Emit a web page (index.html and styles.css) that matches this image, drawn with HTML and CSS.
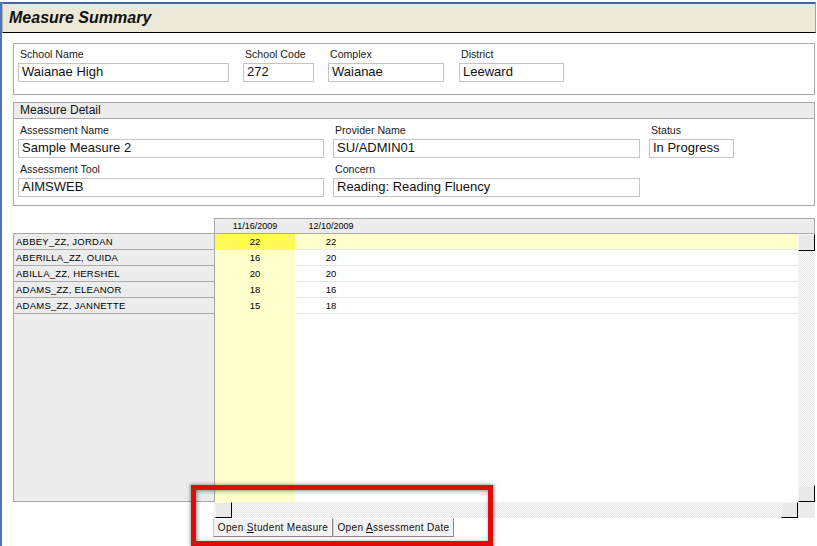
FILE: index.html
```html
<!DOCTYPE html>
<html>
<head>
<meta charset="utf-8">
<title>Measure Summary</title>
<link rel="stylesheet" href="styles.css">
</head>
<body>
<div class="window">
  <div class="titlebar">Measure Summary</div>
  <div class="content">
    <section class="panel school">
      <div class="field f-name"><label>School Name</label><div class="input">Waianae High</div></div>
      <div class="field f-code"><label>School Code</label><div class="input">272</div></div>
      <div class="field f-complex"><label>Complex</label><div class="input">Waianae</div></div>
      <div class="field f-district"><label>District</label><div class="input">Leeward</div></div>
    </section>

    <section class="panel detail">
      <div class="panel-head">Measure Detail</div>
      <div class="detail-grid">
        <div class="field"><label>Assessment Name</label><div class="input">Sample Measure 2</div></div>
        <div class="field"><label>Provider Name</label><div class="input">SU/ADMIN01</div></div>
        <div class="field"><label>Status</label><div class="input">In Progress</div></div>
        <div class="field"><label>Assessment Tool</label><div class="input">AIMSWEB</div></div>
        <div class="field"><label>Concern</label><div class="input">Reading: Reading Fluency</div></div>
      </div>
    </section>

    <div class="grid">
      <div class="corner"></div>
      <div class="col-head"><span class="ch c1">11/16/2009</span><span class="ch c2">12/10/2009</span></div>
      <div class="names">
        <div class="name-row">ABBEY_ZZ, JORDAN</div>
        <div class="name-row">ABERILLA_ZZ, OUIDA</div>
        <div class="name-row">ABILLA_ZZ, HERSHEL</div>
        <div class="name-row">ADAMS_ZZ, ELEANOR</div>
        <div class="name-row">ADAMS_ZZ, JANNETTE</div>
      </div>
      <div class="data">
        <div class="rows">
          <div class="row sel"><div class="cell c1">22</div><div class="cell c2">22</div><div class="fill"></div></div>
          <div class="row"><div class="cell c1">16</div><div class="cell c2">20</div><div class="fill"></div></div>
          <div class="row"><div class="cell c1">20</div><div class="cell c2">20</div><div class="fill"></div></div>
          <div class="row"><div class="cell c1">18</div><div class="cell c2">16</div><div class="fill"></div></div>
          <div class="row"><div class="cell c1">15</div><div class="cell c2">18</div><div class="fill"></div></div>
        </div>
        <div class="vscroll"><div class="sbtn"></div><div class="track"></div><div class="sbtn"></div></div>
      </div>
      <div class="corner"></div>
      <div class="hscroll"><div class="sbtn first"></div><div class="track"></div><div class="sbtn"></div><div class="sq"></div></div>
    </div>

    <div class="actions">
      <button class="btn b1">Open <u>S</u>tudent Measure</button>
      <button class="btn b2">Open <u>A</u>ssessment Date</button>
    </div>
  </div>
</div>
<div class="highlight"></div>
</body>
</html>
```

FILE: styles.css
```css
html, body {
  margin: 0;
  padding: 0;
}
body {
  width: 817px;
  height: 546px;
  overflow: hidden;
  position: relative;
  background: #fff;
  color: #000;
  font-family: "Liberation Sans", Arial, sans-serif;
}

.window {
  height: 546px;
  box-sizing: border-box;
  border-left: 2px solid #4a77b5;
}

.titlebar {
  margin-top: 2px;
  margin-right: 1px;
  height: 28px;
  line-height: 28px;
  padding-left: 6px;
  border-top: 2px solid #3e69ad;
  border-bottom: 1px solid #000;
  border-left: 1px solid #b5b5b5;
  border-right: 1px solid #a0a0a0;
  background: #ece9d8;
  box-shadow: inset 0 1px 0 #e3ead9;
  font-size: 16px;
  font-weight: bold;
  font-style: italic;
  color: #111;
}

.content {
  padding-left: 11px;
}

.panel {
  width: 802px;
  box-sizing: border-box;
  border: 1px solid #a9a9a9;
}

.field label {
  display: block;
  font-size: 10.6px;
  line-height: 12px;
  padding-left: 2px;
  margin-bottom: 3px;
  color: #1a1a1a;
}

.input {
  box-sizing: border-box;
  height: 19px;
  border: 1px solid #c4c4c4;
  padding: 0 3px;
  font-size: 13px;
  line-height: 16px;
  white-space: nowrap;
  overflow: hidden;
  color: #111;
}

/* School panel */
.school {
  margin-top: 10px;
  display: flex;
  padding: 4px 4px 12px 4px;
}
.f-name { width: 211px; }
.f-code { width: 71px; margin-left: 14px; }
.f-complex { width: 116px; margin-left: 14px; }
.f-district { width: 105px; margin-left: 15px; }

/* Detail panel */
.detail {
  margin-top: 7px;
}
.panel-head {
  height: 15px;
  line-height: 15px;
  padding-left: 6px;
  background: #ececec;
  border-bottom: 1px solid #a9a9a9;
  font-size: 12px;
  color: #111;
}
.detail-grid {
  display: grid;
  grid-template-columns: 306px 307px 85px;
  column-gap: 9px;
  row-gap: 5px;
  padding: 5px 4px 8px 4px;
}

/* Data grid */
.grid {
  margin-top: 12px;
  width: 802px;
  display: grid;
  grid-template-columns: 201px 601px;
  grid-template-rows: 15px 269px 16px;
}
.col-head {
  display: flex;
  background: #ececec;
  border: 1px solid #a9a9a9;
  border-bottom: none;
  font-size: 9px;
  line-height: 14px;
}
.ch { text-align: center; }
.ch.c1 { width: 80px; }
.ch.c2 { width: 72px; }

.names {
  background: #ececec;
  border: 1px solid #a9a9a9;
  border-right: none;
}
.name-row {
  height: 15px;
  line-height: 15px;
  padding-left: 2px;
  border-bottom: 1px solid #ababab;
  font-size: 9.5px;
  letter-spacing: 0.25px;
  white-space: nowrap;
}

.data {
  display: flex;
  border-top: 1px solid #a9a9a9;
  border-left: 1px solid #a9a9a9;
}
.rows {
  flex: 1;
  background: linear-gradient(to right, #ffffcc 0, #ffffcc 80px, #fff 80px);
}
.row {
  display: flex;
  height: 16px;
}
.row.sel {
  background: #ffffcc;
}
.cell {
  box-sizing: border-box;
  height: 16px;
  line-height: 15px;
  text-align: center;
  font-size: 9.5px;
}
.cell.c1 { width: 80px; }
.cell.c2 { width: 72px; border-bottom: 1px solid #e6e6e6; }
.row.sel .cell.c1 { background: #fffa55; }
.fill {
  flex: 1;
  box-sizing: border-box;
  height: 16px;
  border-bottom: 1px solid #e6e6e6;
}

.track {
  flex: 1;
  background: repeating-conic-gradient(#e6e6e6 0% 25%, #fbfbfb 0% 50%) 0 0 / 2px 2px;
}
.sbtn {
  box-sizing: border-box;
  width: 17px;
  height: 17px;
  flex: none;
  background: #e9e9e9;
  border-top: 1px solid #f6f6f6;
  border-left: 1px solid #f6f6f6;
  border-right: 1px solid #000;
  border-bottom: 1px solid #000;
}

.vscroll {
  width: 17px;
  display: flex;
  flex-direction: column;
}

.hscroll {
  display: flex;
  background: repeating-conic-gradient(#e6e6e6 0% 25%, #fbfbfb 0% 50%) 0 0 / 2px 2px;
}
.hscroll .sbtn {
  height: 16px;
}
.hscroll .sbtn.first {
  margin-left: 1px;
}
.hscroll .track {
  background: none;
}
.sq {
  width: 17px;
  background: #ececec;
}

/* Action buttons */
.actions {
  display: flex;
  padding-left: 200px;
}
.btn {
  box-sizing: border-box;
  height: 19px;
  margin: 0;
  padding: 0;
  background: #f3f3f3;
  border: 1px solid;
  border-color: #fff #8a8a8a #8a8a8a #cfcfcf;
  font-family: "Liberation Sans", Arial, sans-serif;
  font-size: 10px;
  letter-spacing: 0.35px;
  color: #111;
  text-align: center;
}
.btn.b1 { width: 120px; }
.btn.b2 { width: 121px; }

/* Red annotation box */
.highlight {
  position: absolute;
  left: 191px;
  top: 485px;
  width: 302px;
  height: 61px;
  box-sizing: border-box;
  border: 5px solid #e20b0b;
  box-shadow: 0 0 3px 1px rgba(0, 0, 0, 0.35), inset 1px 1px 4px rgba(0, 0, 0, 0.45);
}
```
